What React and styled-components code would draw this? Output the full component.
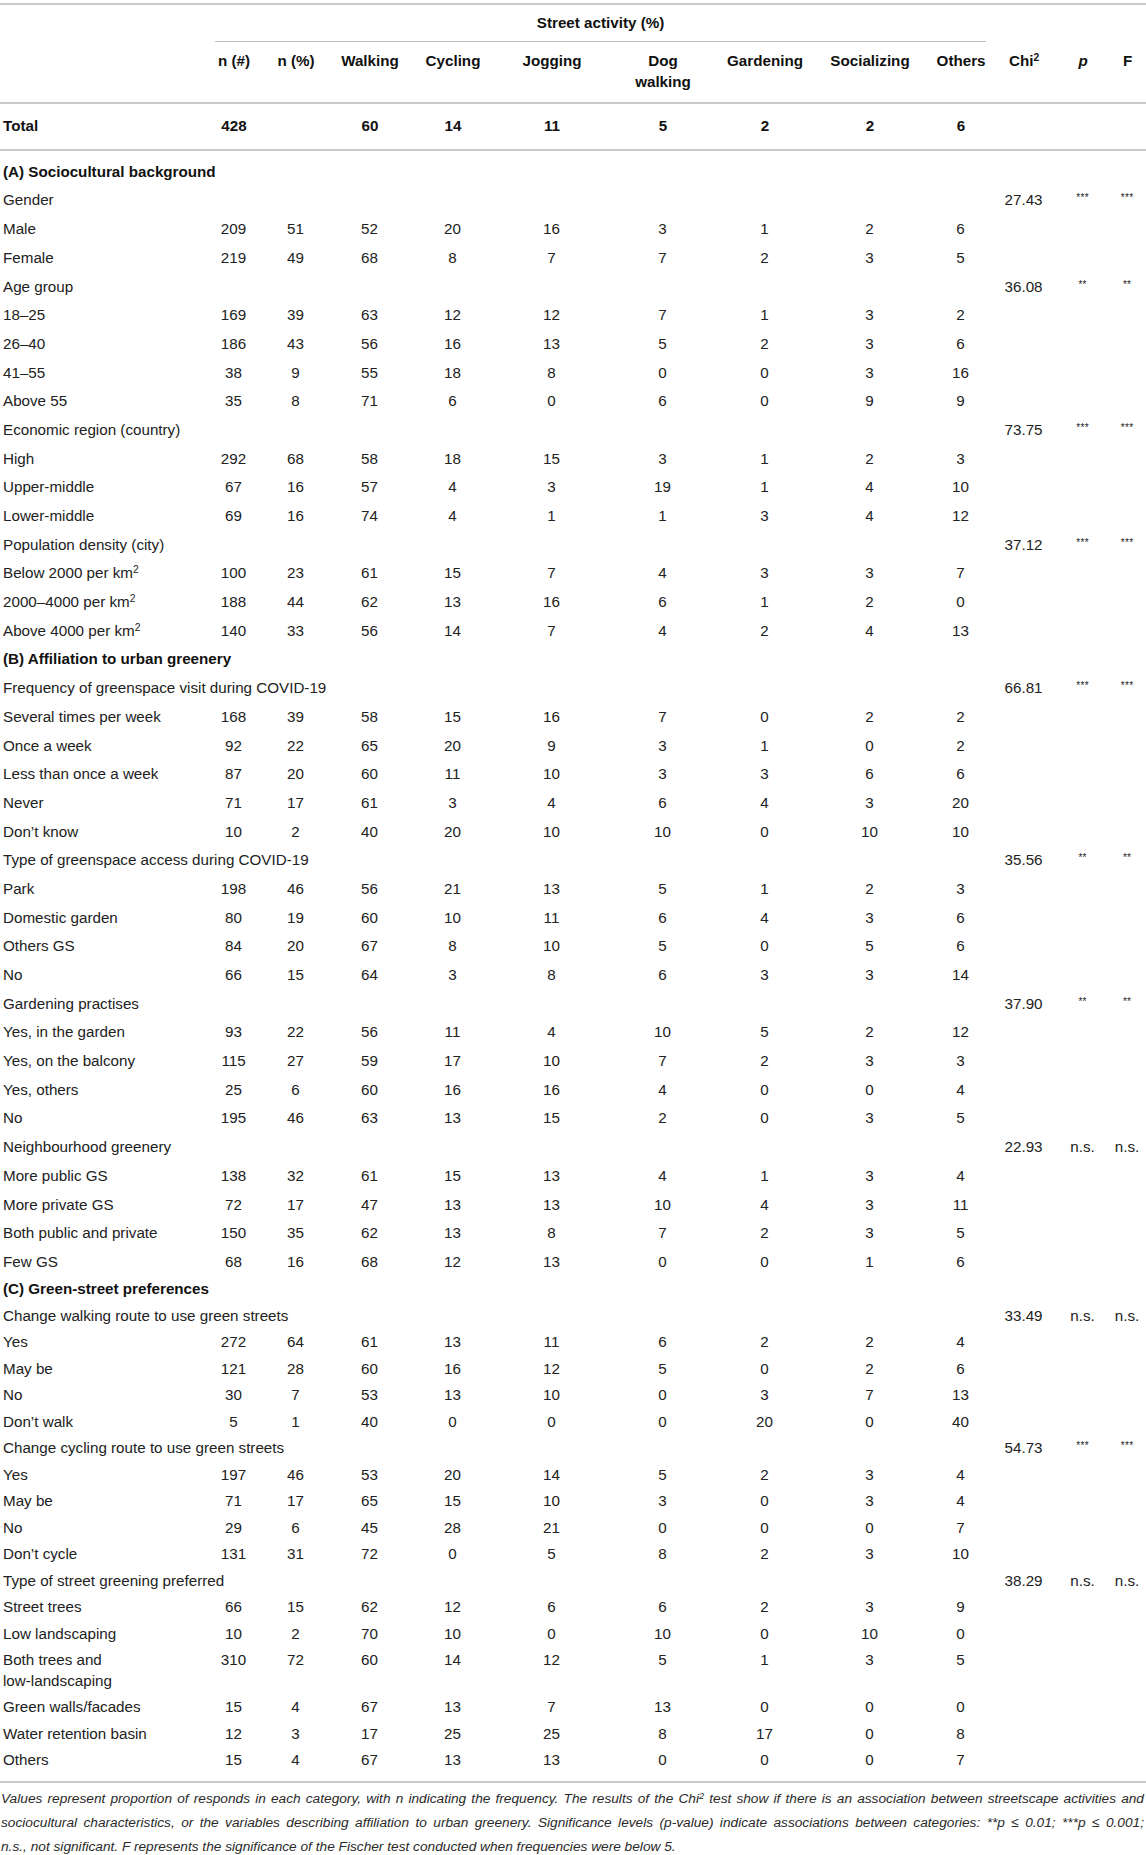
import styled, {createGlobalStyle} from 'styled-components'

const GlobalStyle = createGlobalStyle`
  html, body {
    margin: 0;
    padding: 0;
    background: #ffffff;
  }
  body {
    font-family: 'Liberation Sans', Arial, Helvetica, sans-serif;
    color: #222222;
  }
`

const widths = [209, 50, 74, 74, 92, 106, 116, 88, 122, 60, 66, 52, 37]

const sections = [
  {
    title: '(A) Sociocultural background',
    groups: [
      {
        label: 'Gender', chi: '27.43', p: '***', f: '***',
        rows: [
          ['Male', 209, 51, 52, 20, 16, 3, 1, 2, 6],
          ['Female', 219, 49, 68, 8, 7, 7, 2, 3, 5],
        ],
      },
      {
        label: 'Age group', chi: '36.08', p: '**', f: '**',
        rows: [
          ['18–25', 169, 39, 63, 12, 12, 7, 1, 3, 2],
          ['26–40', 186, 43, 56, 16, 13, 5, 2, 3, 6],
          ['41–55', 38, 9, 55, 18, 8, 0, 0, 3, 16],
          ['Above 55', 35, 8, 71, 6, 0, 6, 0, 9, 9],
        ],
      },
      {
        label: 'Economic region (country)', chi: '73.75', p: '***', f: '***',
        rows: [
          ['High', 292, 68, 58, 18, 15, 3, 1, 2, 3],
          ['Upper-middle', 67, 16, 57, 4, 3, 19, 1, 4, 10],
          ['Lower-middle', 69, 16, 74, 4, 1, 1, 3, 4, 12],
        ],
      },
      {
        label: 'Population density (city)', chi: '37.12', p: '***', f: '***',
        rows: [
          [['Below 2000 per km', '2'], 100, 23, 61, 15, 7, 4, 3, 3, 7],
          [['2000–4000 per km', '2'], 188, 44, 62, 13, 16, 6, 1, 2, 0],
          [['Above 4000 per km', '2'], 140, 33, 56, 14, 7, 4, 2, 4, 13],
        ],
      },
    ],
  },
  {
    title: '(B) Affiliation to urban greenery',
    groups: [
      {
        label: 'Frequency of greenspace visit during COVID-19', chi: '66.81', p: '***', f: '***',
        rows: [
          ['Several times per week', 168, 39, 58, 15, 16, 7, 0, 2, 2],
          ['Once a week', 92, 22, 65, 20, 9, 3, 1, 0, 2],
          ['Less than once a week', 87, 20, 60, 11, 10, 3, 3, 6, 6],
          ['Never', 71, 17, 61, 3, 4, 6, 4, 3, 20],
          ['Don’t know', 10, 2, 40, 20, 10, 10, 0, 10, 10],
        ],
      },
      {
        label: 'Type of greenspace access during COVID-19', chi: '35.56', p: '**', f: '**',
        rows: [
          ['Park', 198, 46, 56, 21, 13, 5, 1, 2, 3],
          ['Domestic garden', 80, 19, 60, 10, 11, 6, 4, 3, 6],
          ['Others GS', 84, 20, 67, 8, 10, 5, 0, 5, 6],
          ['No', 66, 15, 64, 3, 8, 6, 3, 3, 14],
        ],
      },
      {
        label: 'Gardening practises', chi: '37.90', p: '**', f: '**',
        rows: [
          ['Yes, in the garden', 93, 22, 56, 11, 4, 10, 5, 2, 12],
          ['Yes, on the balcony', 115, 27, 59, 17, 10, 7, 2, 3, 3],
          ['Yes, others', 25, 6, 60, 16, 16, 4, 0, 0, 4],
          ['No', 195, 46, 63, 13, 15, 2, 0, 3, 5],
        ],
      },
      {
        label: 'Neighbourhood greenery', chi: '22.93', p: 'n.s.', f: 'n.s.',
        rows: [
          ['More public GS', 138, 32, 61, 15, 13, 4, 1, 3, 4],
          ['More private GS', 72, 17, 47, 13, 13, 10, 4, 3, 11],
          ['Both public and private', 150, 35, 62, 13, 8, 7, 2, 3, 5],
          ['Few GS', 68, 16, 68, 12, 13, 0, 0, 1, 6],
        ],
      },
    ],
  },
  {
    title: '(C) Green-street preferences',
    compact: true,
    groups: [
      {
        label: 'Change walking route to use green streets', chi: '33.49', p: 'n.s.', f: 'n.s.',
        rows: [
          ['Yes', 272, 64, 61, 13, 11, 6, 2, 2, 4],
          ['May be', 121, 28, 60, 16, 12, 5, 0, 2, 6],
          ['No', 30, 7, 53, 13, 10, 0, 3, 7, 13],
          ['Don’t walk', 5, 1, 40, 0, 0, 0, 20, 0, 40],
        ],
      },
      {
        label: 'Change cycling route to use green streets', chi: '54.73', p: '***', f: '***',
        rows: [
          ['Yes', 197, 46, 53, 20, 14, 5, 2, 3, 4],
          ['May be', 71, 17, 65, 15, 10, 3, 0, 3, 4],
          ['No', 29, 6, 45, 28, 21, 0, 0, 0, 7],
          ['Don’t cycle', 131, 31, 72, 0, 5, 8, 2, 3, 10],
        ],
      },
      {
        label: 'Type of street greening preferred', chi: '38.29', p: 'n.s.', f: 'n.s.',
        rows: [
          ['Street trees', 66, 15, 62, 12, 6, 6, 2, 3, 9],
          ['Low landscaping', 10, 2, 70, 10, 0, 10, 0, 10, 0],
          [<>Both trees and<br />low-landscaping</>, 310, 72, 60, 14, 12, 5, 1, 3, 5],
          ['Green walls/facades', 15, 4, 67, 13, 7, 13, 0, 0, 0],
          ['Water retention basin', 12, 3, 17, 25, 25, 8, 17, 0, 8],
          ['Others', 15, 4, 67, 13, 13, 0, 0, 0, 7],
        ],
      },
    ],
  },
]

// flatten sections into table rows
const bodyRows = []
sections.forEach(section => {
  bodyRows.push({kind: 'section', title: section.title, compact: section.compact})
  section.groups.forEach(group => {
    bodyRows.push({kind: 'group', ...group, compact: section.compact})
    group.rows.forEach(values => {
      bodyRows.push({kind: 'item', values, compact: section.compact})
    })
  })
})

const Page = styled.div`
  width: 1146px;
  padding-top: 3px;
`

const Table = styled.table`
  width: 1146px;
  table-layout: fixed;
  border-collapse: separate;
  border-spacing: 0;
  border-top: 2px solid #c9c9c9;
  border-bottom: 2px solid #c9c9c9;
  font-size: 15.2px;
  line-height: 20.5px;
`

const HeadCell = styled.th`
  padding: ${p => (p.$top ? '0' : '9.5px 0 10px')};
  border-bottom: ${p => (p.$top ? 'none' : '2px solid #c9c9c9')};
  text-align: center;
  vertical-align: top;
  font-weight: 700;
  color: #111111;
`

const Rule = styled.div`
  margin: 0 5px 0 6px;
  padding: 7.5px 0;
  border-bottom: 1px solid #bdbdbd;
`

const TotalCell = styled.td`
  padding: 12.25px 0 12.25px ${p => (p.$label ? '3px' : '0')};
  border-bottom: 2px solid #c9c9c9;
  text-align: ${p => (p.$label ? 'left' : 'center')};
  vertical-align: top;
  font-weight: 700;
  color: #111111;
`

const Cell = styled.td`
  padding-top: ${p => (p.$first ? 10.75 : p.$compact ? 3 : 4.1)}px;
  padding-bottom: ${p => (p.$last ? 10.15 : p.$compact ? 3 : 4.1)}px;
  padding-left: ${p => (p.$label ? 3 : 0)}px;
  text-align: ${p => (p.$label ? 'left' : 'center')};
  vertical-align: top;
  font-weight: ${p => (p.$bold ? 700 : 400)};
  color: ${p => (p.$bold ? '#111111' : '#222222')};
`

const Sup = styled.sup`
  font-size: 0.68em;
  line-height: 0;
  vertical-align: 0.45em;
`

const Stars = styled.span`
  font-size: 10px;
  line-height: 0;
  vertical-align: 4px;
  letter-spacing: 0.3px;
`

const Italic = styled.span`
  font-style: italic;
`

const Note = styled.div`
  margin-top: 4px;
  padding: 0 2px 0 1px;
  font-size: 13.7px;
  line-height: 24px;
  font-style: italic;
  color: #2a2a2a;
`

const NoteLine = styled.p`
  margin: 0;
  text-align: ${p => (p.$full ? 'justify' : 'left')};
  text-align-last: ${p => (p.$full ? 'justify' : 'left')};
`

const Label = ({value}) =>
  Array.isArray(value) ? (
    <>
      {value[0]}
      <Sup>{value[1]}</Sup>
    </>
  ) : (
    value
  )

const Sig = ({value}) => (value === 'n.s.' ? value : <Stars>{value}</Stars>)

const headers = [
  'n (#)',
  'n (%)',
  'Walking',
  'Cycling',
  'Jogging',
  <>Dog<br />walking</>,
  'Gardening',
  'Socializing',
  'Others',
  <>Chi<Sup>2</Sup></>,
  <Italic>p</Italic>,
  'F',
]

const totals = [428, '', 60, 14, 11, 5, 2, 2, 6, '', '', '']

export default function App() {
  const lastIndex = bodyRows.length - 1

  return (
    <Page>
      <GlobalStyle />
      <Table>
        <colgroup>
          {widths.map((w, i) => (
            <col key={i} style={{width: w}} />
          ))}
        </colgroup>
        <thead>
          <tr>
            <HeadCell $top />
            <HeadCell $top colSpan={9}>
              <Rule>Street activity (%)</Rule>
            </HeadCell>
            <HeadCell $top colSpan={3} />
          </tr>
          <tr>
            <HeadCell />
            {headers.map((h, i) => (
              <HeadCell key={i}>{h}</HeadCell>
            ))}
          </tr>
        </thead>
        <tbody>
          <tr>
            <TotalCell $label>Total</TotalCell>
            {totals.map((v, i) => (
              <TotalCell key={i}>{v}</TotalCell>
            ))}
          </tr>
        </tbody>
        <tbody>
          {bodyRows.map((row, i) => {
            const shared = {$compact: row.compact, $first: i === 0, $last: i === lastIndex}
            if (row.kind === 'section') {
              return (
                <tr key={i}>
                  <Cell {...shared} $label $bold colSpan={13}>
                    {row.title}
                  </Cell>
                </tr>
              )
            }
            if (row.kind === 'group') {
              return (
                <tr key={i}>
                  <Cell {...shared} $label colSpan={10}>
                    {row.label}
                  </Cell>
                  <Cell {...shared}>{row.chi}</Cell>
                  <Cell {...shared}>
                    <Sig value={row.p} />
                  </Cell>
                  <Cell {...shared}>
                    <Sig value={row.f} />
                  </Cell>
                </tr>
              )
            }
            const [label, ...nums] = row.values
            return (
              <tr key={i}>
                <Cell {...shared} $label>
                  <Label value={label} />
                </Cell>
                {nums.map((n, j) => (
                  <Cell {...shared} key={j}>
                    {n}
                  </Cell>
                ))}
                <Cell {...shared} />
                <Cell {...shared} />
                <Cell {...shared} />
              </tr>
            )
          })}
        </tbody>
      </Table>
      <Note>
        <NoteLine $full>
          Values represent proportion of responds in each category, with n indicating the
          frequency. The results of the Chi<Sup>2</Sup> test show if there is an association
          between streetscape activities and
        </NoteLine>
        <NoteLine $full>
          sociocultural characteristics, or the variables describing affiliation to urban
          greenery. Significance levels (p-value) indicate associations between categories: **p
          ≤ 0.01; ***p ≤ 0.001;
        </NoteLine>
        <NoteLine>
          n.s., not significant. F represents the significance of the Fischer test conducted
          when frequencies were below 5.
        </NoteLine>
      </Note>
    </Page>
  )
}
